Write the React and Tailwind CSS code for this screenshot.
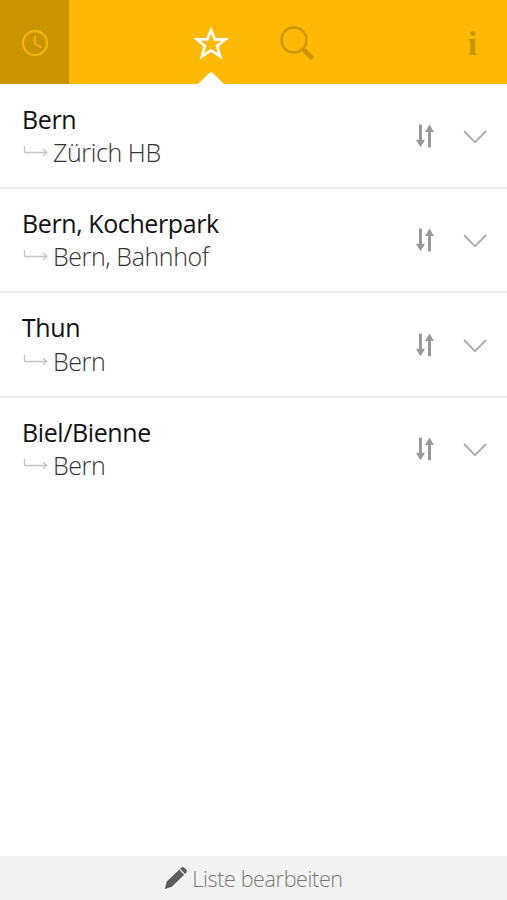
import React from "react";

const connections = [
  { from: "Bern", to: "Zürich HB" },
  { from: "Bern, Kocherpark", to: "Bern, Bahnhof" },
  { from: "Thun", to: "Bern" },
  { from: "Biel/Bienne", to: "Bern" },
];

function ClockIcon() {
  return (
    <svg width="28" height="28" viewBox="0 0 28 28" fill="none" stroke="currentColor">
      <circle cx="14" cy="14" r="12" strokeWidth="2.3" />
      <path d="M13.8 7v7.5l6.6 4" strokeWidth="2" />
    </svg>
  );
}

function StarIcon() {
  return (
    <svg width="36" height="36" viewBox="0 0 36 36" fill="none" stroke="currentColor" strokeWidth="2.7">
      <path d="M18 6l3.8 9.4h10.4l-8.1 6.6 3 10.4L18 26.3l-9.1 6.1 3-10.4-8.1-6.6h10.4z" />
    </svg>
  );
}

function SearchIcon() {
  return (
    <svg width="36" height="36" viewBox="0 0 36 36" fill="none" stroke="currentColor">
      <circle cx="15" cy="15" r="12.5" strokeWidth="2.5" />
      <path d="M23.6 23.6l2.6 2.6" strokeWidth="2.8" />
      <path d="M25 25l8.6 8.6" strokeWidth="4.6" />
    </svg>
  );
}

function ReturnIcon() {
  return (
    <svg width="25" height="12" viewBox="0 0 25 12" fill="none" stroke="currentColor" strokeWidth="1.3">
      <path d="M1.5 0v5.5q0 1 1 1H24M20 3l3.8 3.5L20 10" />
    </svg>
  );
}

function SwapIcon() {
  return (
    <svg width="18" height="24" viewBox="0 0 18 24" fill="currentColor">
      <path d="M3 0.5h3v15.3h3L4.5 23.2 0 15.8h3z" />
      <path d="M12 23.2h3V7.9h3L13.5 0.5 9 7.9h3z" />
    </svg>
  );
}

function ChevronIcon() {
  return (
    <svg width="24" height="14" viewBox="0 0 24 14" fill="none" stroke="currentColor" strokeWidth="1.8">
      <path d="M1 1l11 11.3L23 1" />
    </svg>
  );
}

function PencilIcon() {
  return (
    <svg width="24" height="24" viewBox="0 0 24 24" fill="currentColor">
      <path d="M0.8 23l2-7.4L15.2 3.8l5 5L7.8 20.8z" />
      <path d="M16.1 3l1.6-1.5q1.3-1 2.6.2l2 2q1.2 1.3.2 2.6L21 8z" />
    </svg>
  );
}

function Header() {
  return (
    <header className="flex h-[84px] bg-[#fdb903] text-[#cb9604]">
      <button className="flex w-[68.5px] items-center justify-center bg-[#c99400] pt-0.5 pl-px text-[#f4b508]">
        <ClockIcon />
      </button>
      <nav className="flex flex-1 items-start">
        <button className="relative ml-[99.5px] flex h-full w-[86px] justify-center pt-6 text-white">
          <StarIcon />
          {/* marker of the active tab */}
          <svg className="absolute bottom-0 left-[30px]" width="26" height="12" viewBox="0 0 26 12" fill="currentColor">
            <path d="M0 12L11.5 0.8q1.5-1.2 3 0L26 12z" />
          </svg>
        </button>
        <button className="ml-[25px] pt-[25px]">
          <SearchIcon />
        </button>
      </nav>
      <button className="w-[69px] pt-0.5 font-['Liberation_Serif',serif] text-[34px] leading-[84px] font-bold">
        i
      </button>
    </header>
  );
}

function Connection({ from, to, last }) {
  return (
    <li
      className={`flex h-[104.4px] items-start justify-between pt-[18px] pr-[20px] pl-[22px] ${
        last ? "" : "border-b-2 border-[#ececec]"
      }`}
    >
      <div className="text-[25px] leading-[33.5px] tracking-[-0.4px] whitespace-nowrap">
        <p className="text-[#111]">{from}</p>
        <p className="flex items-start font-light text-[#333]">
          <span className="mt-2.5 mr-[5px] ml-px text-[#c4c4c4]">
            <ReturnIcon />
          </span>
          {to}
        </p>
      </div>
      <div className="flex items-center pt-[21.2px] text-[#999]">
        <SwapIcon />
        <span className="mt-0.5 ml-[29px] text-[#aaa]">
          <ChevronIcon />
        </span>
      </div>
    </li>
  );
}

export default function App() {
  return (
    <div className="flex h-[900px] w-[507px] flex-col overflow-hidden bg-white font-['Open_Sans',sans-serif]">
      <Header />
      <ul className="flex-1 pt-[0.6px]">
        {connections.map((c, i) => (
          <Connection key={i} from={c.from} to={c.to} last={i === connections.length - 1} />
        ))}
      </ul>
      <footer className="flex h-[44px] items-center justify-center bg-[#f3f3f3] text-[21.5px] font-light tracking-[-0.35px] text-[#777]">
        <span className="mr-[4px] text-[#5c5c5c]">
          <PencilIcon />
        </span>
        <span className="pt-[3px]">Liste bearbeiten</span>
      </footer>
    </div>
  );
}
